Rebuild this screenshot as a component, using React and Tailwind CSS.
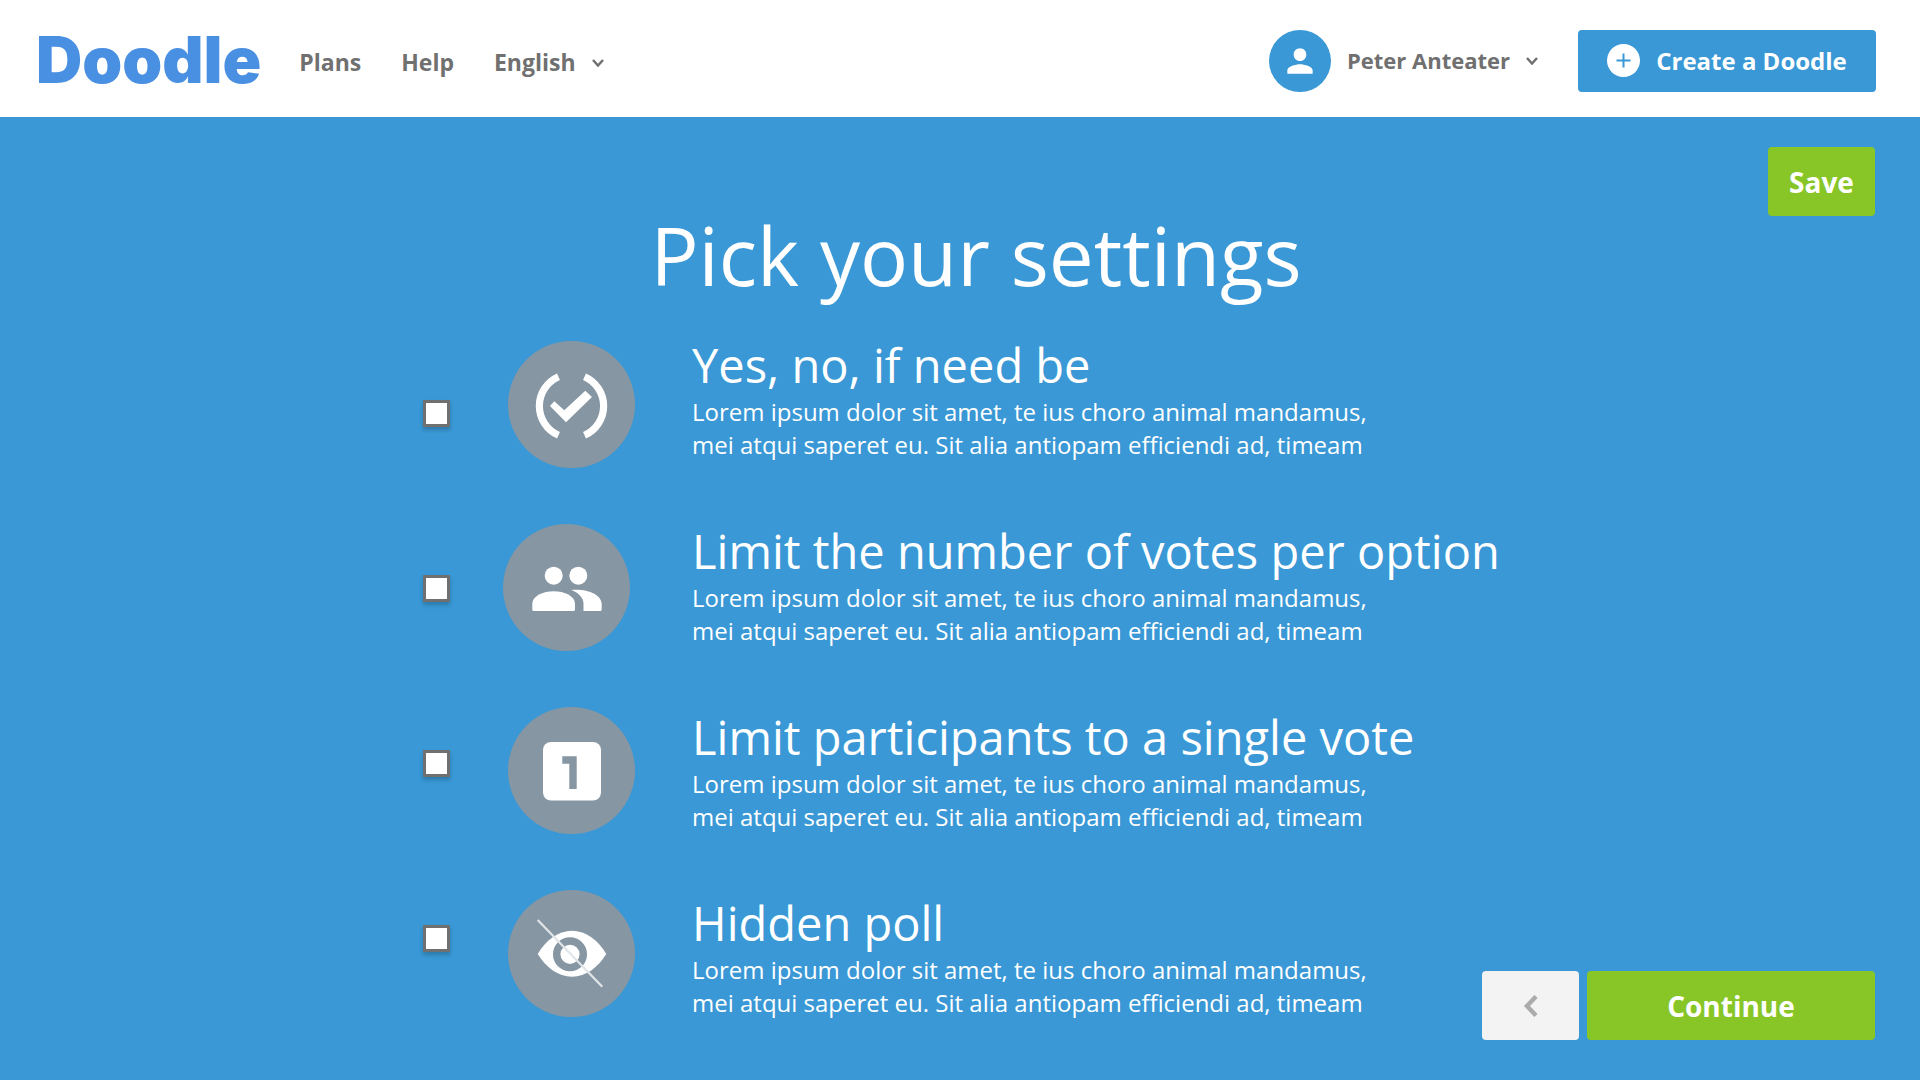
import { MdPerson } from "react-icons/md";

const DESCRIPTION = [
  "Lorem ipsum dolor sit amet, te ius choro animal mandamus,",
  "mei atqui saperet eu. Sit alia antiopam efficiendi ad, timeam",
];

function Chevron({ className = "" }) {
  return (
    <svg
      viewBox="0 0 12 8"
      aria-hidden="true"
      className={`h-2 w-3 fill-none stroke-current stroke-[2.5] ${className}`}
    >
      <path d="M1 1l5 5.5L11 1" />
    </svg>
  );
}

function IfNeedBeIcon() {
  return (
    <svg viewBox="0 0 127 127" className="size-full" aria-hidden="true">
      <g fill="none" stroke="#fff" strokeWidth="7.2">
        <path d="M50.5 35.7A32 32 0 0 0 50.5 94.3" />
        <path d="M76.5 35.7A32 32 0 0 1 76.5 94.3" />
      </g>
      <path
        fill="#fff"
        d="M42 65L46.3 60.3L56.3 69.3L77.3 49.7L84 56L58 81.3Z"
      />
    </svg>
  );
}

function GroupIcon() {
  return (
    <svg viewBox="0 0 127 127" className="size-full" aria-hidden="true" fill="#fff">
      <circle cx="50.7" cy="51.7" r="9" />
      <circle cx="75.3" cy="51.7" r="9" />
      <path d="M29.3 80C29.3 72 40 67.3 50.7 67.3S72 72 72 80V85.5Q72 87 70.5 87H30.8Q29.3 87 29.3 85.5Z" />
      <path d="M68.3 66C85 64.5 98.7 71 98.7 80V85.5Q98.7 87 97.2 87H80.5V79.5C80.5 73.5 75 68.5 68.3 66Z" />
    </svg>
  );
}

function SingleVoteIcon() {
  return (
    <svg viewBox="0 0 127 127" className="size-full" aria-hidden="true">
      <rect x="35" y="35" width="58" height="58.5" rx="8" fill="#fff" />
      <path d="M54.3 53H65V82" fill="none" stroke="#8696a3" strokeWidth="7.4" />
    </svg>
  );
}

function HiddenIcon() {
  return (
    <svg viewBox="0 0 127 127" className="size-full" aria-hidden="true">
      <path
        fill="#fff"
        d="M29.7 64C38 50 50 40.7 64 40.7S90 50 98.3 64C90 77.5 78 86.7 64 86.7S38 77.5 29.7 64Z"
      />
      <circle cx="62" cy="64.3" r="13.3" fill="#fff" stroke="#8696a3" strokeWidth="7.4" />
      <path d="M29.7 30L94.3 96.7" stroke="#e1e5e8" strokeWidth="2.2" />
    </svg>
  );
}

const SETTINGS = [
  { id: "if-need-be", title: "Yes, no, if need be", Icon: IfNeedBeIcon },
  { id: "limit-votes", title: "Limit the number of votes per option", Icon: GroupIcon, start: true },
  { id: "single-vote", title: "Limit participants to a single vote", Icon: SingleVoteIcon },
  { id: "hidden-poll", title: "Hidden poll", Icon: HiddenIcon },
];

function Header() {
  return (
    <header className="flex h-[117px] items-center justify-between bg-white pr-11 pl-9 text-[23px] font-bold text-[#707070]">
      <div className="flex items-center">
        <a
          href="#"
          className="pt-[2px] font-['Inter','Open_Sans',sans-serif] text-[64px] leading-[64px] font-black text-[#4a90e2]"
        >
          Doodle
        </a>
        <nav className="ml-[38px] flex items-center gap-10 pt-2">
          <a href="#plans">Plans</a>
          <a href="#help">Help</a>
          <div className="relative flex items-center">
            <select
              aria-label="Language"
              className="appearance-none bg-transparent pr-7 font-bold"
              defaultValue="English"
            >
              <option>English</option>
            </select>
            <Chevron className="pointer-events-none absolute right-0" />
          </div>
        </nav>
      </div>
      <div className="flex items-center pt-1">
        <button type="button" className="flex items-center">
          <span className="flex size-[62px] items-center justify-center rounded-full bg-[#3998d5] text-white">
            <MdPerson className="size-[38px]" aria-hidden="true" />
          </span>
          <span className="ml-4 text-[22px]">Peter Anteater</span>
          <Chevron className="ml-4" />
        </button>
        <button
          type="button"
          className="ml-10 flex h-[62px] w-[298px] items-center justify-center gap-4 rounded bg-[#3998d5] text-2xl text-white"
        >
          <svg viewBox="0 0 33 33" className="size-[33px]" aria-hidden="true">
            <circle cx="16.5" cy="16.5" r="16.5" fill="#fff" />
            <path d="M16.5 9.5v14M9.5 16.5h14" stroke="#3998d5" strokeWidth="2" />
          </svg>
          Create a Doodle
        </button>
      </div>
    </header>
  );
}

export default function App() {
  return (
    <div className="flex min-h-screen flex-col bg-[#3998d5] font-['Open_Sans','Noto_Sans',sans-serif]">
      <Header />
      <main className="relative flex-1 pl-8 text-white">
        <button
          type="button"
          className="absolute top-[30px] right-[45px] h-[69px] w-[107px] rounded-sm bg-[#88c628] text-[28px] font-bold"
        >
          Save
        </button>

        <h1 className="pt-[78px] text-center text-[80px] leading-[120px]">Pick your settings</h1>

        <form className="mx-auto flex w-full max-w-[1106px] pt-5">
          <div className="flex flex-col gap-[148px] pt-[65px]">
            {SETTINGS.map(({ id }) => (
              <input
                key={id}
                id={id}
                type="checkbox"
                className="size-[27px] appearance-none border-3 border-[#707070] bg-white shadow-[0_3px_4px_rgba(0,0,0,0.2)] checked:bg-[#88c628]"
              />
            ))}
          </div>
          <div className="ml-[53px] flex w-[132px] shrink-0 flex-col items-end gap-14 pt-[6px]">
            {SETTINGS.map(({ id, Icon, start }) => (
              <div
                key={id}
                className={`flex size-[127px] items-center justify-center rounded-full bg-[#8696a3] ${start ? "self-start" : ""}`}
              >
                <Icon />
              </div>
            ))}
          </div>
          <div className="ml-[57px] flex flex-col gap-[60px]">
            {SETTINGS.map(({ id, title }) => (
              <label key={id} htmlFor={id} className="block whitespace-nowrap">
                <span className="block text-[47px] leading-[60px]">{title}</span>
                <span className="block text-2xl leading-[33px]">
                  {DESCRIPTION[0]}
                  <br />
                  {DESCRIPTION[1]}
                </span>
              </label>
            ))}
          </div>
        </form>

        <div className="absolute right-[45px] bottom-10 flex gap-2">
          <button
            type="button"
            aria-label="Back"
            className="flex h-[69px] w-[97px] items-center justify-center rounded-sm bg-[#f3f3f3]"
          >
            <svg viewBox="0 0 16 22" className="h-[22px] w-4" aria-hidden="true">
              <path d="M13 1.5L4 11L13 20.5" fill="none" stroke="#ababab" strokeWidth="4.5" />
            </svg>
          </button>
          <button
            type="button"
            className="h-[69px] w-[288px] rounded bg-[#88c628] text-[28px] font-bold"
          >
            Continue
          </button>
        </div>
      </main>
    </div>
  );
}
